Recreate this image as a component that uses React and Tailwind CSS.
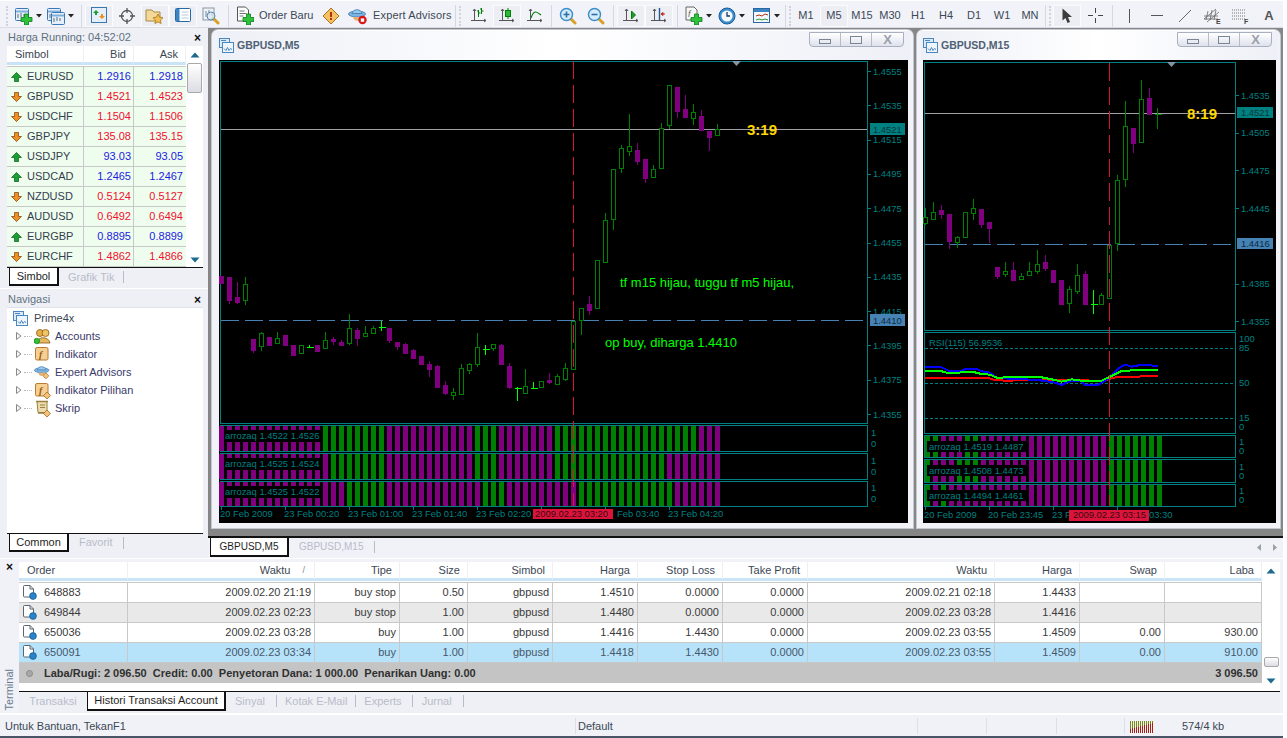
import React from 'react';

const PURPLE = '#800080';
const GREEN = '#008000';
const TEAL = '#008080';
const CRIMSON = '#dc143c';

// [kind, bodyTop, bodyBottom, wickTop, wickBottom]; p = bearish, g = bullish, d = doji
const candlesM5 = [
  ['p', 276, 283, 276, 283], ['p', 277, 300, 277, 304], ['p', 297, 302, 282, 304], ['g', 284, 300, 277, 305],
  ['p', 339, 350, 339, 353], ['g', 333, 346, 332, 351], ['p', 337, 345, 337, 346], ['g', 338, 343, 332, 343],
  ['p', 335, 345, 335, 345], ['p', 345, 355, 345, 355], ['g', 345, 353, 345, 353], ['d', 347, 347, 345, 348],
  ['p', 345, 351, 345, 351], ['g', 340, 348, 332, 348], ['p', 339, 341, 337, 345], ['p', 342, 345, 340, 346],
  ['g', 328, 343, 314, 345], ['p', 330, 338, 328, 346], ['g', 333, 336, 326, 336], ['g', 328, 333, 326, 333],
  ['d', 327, 327, 321, 331], ['p', 328, 340, 328, 343], ['p', 342, 346, 342, 350], ['p', 344, 353, 343, 353],
  ['p', 350, 358, 349, 358], ['p', 356, 364, 356, 364], ['p', 364, 369, 361, 377], ['p', 366, 387, 365, 387],
  ['p', 385, 393, 381, 395], ['g', 392, 395, 388, 400], ['g', 368, 394, 364, 395], ['g', 364, 370, 363, 374],
  ['g', 347, 364, 333, 367], ['d', 349, 349, 345, 355], ['g', 344, 348, 344, 351], ['p', 345, 364, 344, 365],
  ['p', 366, 387, 363, 389], ['d', 388, 388, 387, 401], ['g', 386, 393, 369, 394], ['d', 388, 388, 382, 389],
  ['g', 381, 387, 381, 388], ['p', 380, 382, 373, 384], ['g', 376, 384, 374, 384], ['g', 368, 379, 363, 381],
  ['g', 321, 369, 321, 369], ['g', 308, 320, 308, 335], ['p', 304, 310, 296, 315], ['g', 260, 308, 260, 308],
  ['g', 220, 262, 213, 262], ['g', 169, 219, 169, 230], ['g', 148, 168, 145, 173], ['g', 146, 151, 114, 156],
  ['p', 150, 161, 143, 165], ['p', 159, 178, 159, 183], ['g', 169, 177, 165, 178], ['g', 128, 168, 123, 168],
  ['g', 85, 125, 85, 129], ['p', 87, 111, 87, 118], ['p', 109, 117, 95, 118], ['g', 112, 118, 104, 125],
  ['p', 116, 130, 110, 130], ['p', 131, 137, 131, 151], ['g', 129, 135, 124, 135],
];

const candlesM15 = [
  ['g', 217, 223, 208, 225], ['g', 212, 219, 202, 219], ['p', 210, 214, 205, 219], ['p', 214, 241, 214, 249],
  ['g', 237, 242, 236, 248], ['g', 212, 237, 212, 237], ['g', 208, 213, 199, 220], ['p', 209, 224, 209, 228],
  ['p', 222, 228, 222, 243], ['p', 267, 276, 267, 279], ['g', 271, 274, 262, 277], ['p', 270, 280, 262, 280],
  ['g', 276, 279, 273, 279], ['g', 271, 275, 262, 275], ['g', 264, 271, 250, 274], ['p', 262, 268, 255, 271],
  ['p', 270, 282, 270, 282], ['p', 280, 304, 280, 304], ['g', 289, 303, 286, 313], ['g', 275, 291, 264, 294],
  ['p', 274, 304, 271, 305], ['d', 304, 304, 290, 314], ['g', 295, 304, 293, 305], ['g', 245, 298, 245, 299],
  ['g', 180, 243, 175, 251], ['g', 126, 179, 101, 187], ['p', 128, 143, 128, 153], ['g', 99, 142, 80, 142],
  ['p', 98, 114, 88, 114], ['c', 114, 114, 108, 129],
];

const Candles = ({ data, startX }) => (
  <g shapeRendering="crispEdges">
    {data.map((c, i) => {
      const x = startX + 8 * i + 0.5;
      const [kind, top, bottom, wickTop, wickBottom] = c;
      if (kind === 'd' || kind === 'c') {
        const col = kind === 'd' ? '#00ff00' : GREEN;
        return (
          <g key={i} stroke={col}>
            <line x1={x} x2={x} y1={wickTop} y2={wickBottom} />
            <line x1={x - 3} x2={x + 4} y1={top + 0.5} y2={top + 0.5} />
          </g>
        );
      }
      const col = kind === 'p' ? PURPLE : GREEN;
      return (
        <g key={i} stroke={col}>
          <line x1={x} x2={x} y1={wickTop} y2={wickBottom} />
          <rect x={x - 2} y={top + 0.5} width={4} height={bottom - top} fill={kind === 'p' ? PURPLE : '#000'} />
        </g>
      );
    })}
  </g>
);

// runs of the coloured bars: [last index, colour]
const barColor = (runs, i) => {
  for (const [end, col] of runs) if (i <= end) return col;
  return PURPLE;
};

const Strip = ({ x, y, h, count, runs }) => (
  <g shapeRendering="crispEdges">
    {Array.from({ length: count }).map((_, i) => (
      <rect key={i} x={x + 8 * i} y={y} width={5} height={h} fill={barColor(runs, i)} />
    ))}
  </g>
);

const AxisLabel = ({ x, y, children, fill = TEAL }) => (
  <text x={x} y={y} fill={fill}>{children}</text>
);

const ChartM5 = () => {
  const prices = ['1.4555', '1.4535', '1.4515', '1.4495', '1.4475', '1.4455', '1.4435', '1.4415', '1.4395', '1.4375', '1.4355'];
  const strips = [
    { y: 426, runs: [[12, PURPLE], [20, GREEN], [31, PURPLE], [34, GREEN], [41, PURPLE], [59, GREEN]], label: 'arrozaq 1.4522 1.4526' },
    { y: 454, runs: [[13, PURPLE], [20, GREEN], [31, PURPLE], [34, GREEN], [41, PURPLE], [55, GREEN]], label: 'arrozaq 1.4525 1.4524' },
    { y: 482, runs: [[15, PURPLE], [20, GREEN], [32, PURPLE], [35, GREEN], [44, PURPLE], [56, GREEN]], label: 'arrozaq 1.4525 1.4522' },
  ];
  const times = [[220, '20 Feb 2009'], [284, '23 Feb 00:20'], [348, '23 Feb 01:00'], [412, '23 Feb 01:40'], [476, '23 Feb 02:20'], [617, 'Feb 03:40'], [668, '23 Feb 04:20']];
  return (
    <svg width="689" height="463" viewBox="219 60 689 463" className="block bg-black font-['Liberation_Sans',sans-serif] text-[9.4px]">
      <g fill="none" stroke={TEAL} shapeRendering="crispEdges">
        <rect x="220.5" y="61.5" width="647" height="362" />
        <rect x="220.5" y="425.5" width="647" height="26" />
        <rect x="220.5" y="453.5" width="647" height="26" />
        <rect x="220.5" y="481.5" width="647" height="25" />
        {prices.map((p, i) => <line key={p} x1="867" x2="871" y1={71.5 + i * 34.3} y2={71.5 + i * 34.3} />)}
        {[221, 285, 349, 413, 477, 541, 605, 669].map((x) => <line key={x} x1={x + 0.5} x2={x + 0.5} y1="507" y2="510" />)}
      </g>
      <polygon points="732,61 741,61 736.5,66" fill="#7f97a6" />
      <line x1="221" x2="867" y1="129.5" y2="129.5" stroke="#a0a0a4" shapeRendering="crispEdges" />
      <line x1="221" x2="867" y1="320.5" y2="320.5" stroke="#4682b4" strokeDasharray="18 6" shapeRendering="crispEdges" />
      <Candles data={candlesM5} startX={221} />
      {strips.map((s) => (
        <g key={s.y}>
          <Strip x={219} y={s.y} h={s.y === 482 ? 24 : 25} count={63} runs={s.runs} />
          <rect x="225" y={s.y + 4} width="98" height="12" fill="#000" />
          <AxisLabel x={225} y={s.y + 13}>{s.label}</AxisLabel>
        </g>
      ))}
      <line x1="573.5" x2="573.5" y1="61" y2="506" stroke={CRIMSON} strokeDasharray="18 6" shapeRendering="crispEdges" />
      {prices.map((p, i) => <AxisLabel key={p} x={873} y={74.5 + i * 34.3}>{p}</AxisLabel>)}
      <rect x="870" y="123" width="35" height="12" fill={TEAL} />
      <AxisLabel x={873} y={132.5} fill="#06383a">1.4521</AxisLabel>
      <rect x="870" y="314" width="35" height="12" fill="#4682b4" />
      <AxisLabel x={873} y={323.5} fill="#0b2a44">1.4410</AxisLabel>
      {[['1', 436], ['0', 447], ['1', 464], ['0', 475], ['1', 491], ['0', 502]].map(([v, y]) => <AxisLabel key={y} x={871} y={y}>{v}</AxisLabel>)}
      {times.map(([x, t]) => <AxisLabel key={x} x={x} y={517}>{t}</AxisLabel>)}
      <rect x="533" y="509" width="80" height="10" fill={CRIMSON} />
      <AxisLabel x={535} y={517} fill="#3a0a10">2009.02.23 03:20</AxisLabel>
      <text x="747" y="135" fill="#ffd700" className="text-[15px] font-bold">3:19</text>
      <text x="620" y="287" fill="#00ff00" className="text-[13px]">tf m15 hijau, tuggu tf m5 hijau,</text>
      <text x="605" y="347" fill="#00ff00" className="text-[13px]">op buy, diharga 1.4410</text>
    </svg>
  );
};

const rsiLine = (pts) => pts.map(([x, y]) => `${915 + x / 3},${190 + y / 3}`).join(' ');
const rsiBlue = [[30, 530], [75, 530], [100, 542], [140, 542], [155, 536], [185, 536], [200, 544], [225, 548], [245, 564], [370, 570], [420, 578], [440, 585], [460, 575], [495, 572], [510, 584], [550, 584], [580, 566], [610, 535], [630, 524], [650, 530], [680, 524], [728, 528]];
const rsiGreen = [[30, 542], [75, 542], [100, 550], [125, 550], [140, 546], [175, 546], [200, 552], [225, 554], [245, 563], [370, 560], [420, 570], [440, 575], [470, 568], [500, 572], [560, 572], [590, 558], [620, 543], [670, 540], [728, 540]];
const rsiRed = [[30, 564], [220, 564], [240, 570], [270, 572], [370, 570], [570, 572], [590, 565], [610, 560], [660, 561], [690, 558], [728, 558]];

const ChartM15 = () => {
  const prices = [['1.4535', 0], ['1.4505', 1], ['1.4475', 2], ['1.4445', 3], ['1.4385', 5], ['1.4355', 6]];
  const strips = [
    { y: 436, h: 21, runs: [[1, GREEN], [4, PURPLE], [6, GREEN], [22, PURPLE], [29, GREEN]], label: 'arrozaq 1.4519 1.4487' },
    { y: 460, h: 22, runs: [[0, GREEN], [3, PURPLE], [6, GREEN], [22, PURPLE], [29, GREEN]], label: 'arrozaq 1.4508 1.4473' },
    { y: 485, h: 21, runs: [[0, GREEN], [1, PURPLE], [2, GREEN], [22, PURPLE], [29, GREEN]], label: 'arrozaq 1.4494 1.4461' },
  ];
  return (
    <svg width="353" height="463" viewBox="923 60 353 463" className="block bg-black font-['Liberation_Sans',sans-serif] text-[9.4px]">
      <g fill="none" stroke={TEAL} shapeRendering="crispEdges">
        <rect x="924.5" y="62.5" width="311" height="268" />
        <rect x="924.5" y="332.5" width="311" height="101" />
        <rect x="924.5" y="435.5" width="311" height="22" />
        <rect x="924.5" y="459.5" width="311" height="23" />
        <rect x="924.5" y="484.5" width="311" height="22" />
        {prices.map(([p, i]) => <line key={p} x1="1235" x2="1239" y1={95.5 + i * 37.7} y2={95.5 + i * 37.7} />)}
        {[925, 989, 1053, 1117].map((x) => <line key={x} x1={x + 0.5} x2={x + 0.5} y1="507" y2="510" />)}
      </g>
      <g stroke={TEAL} strokeDasharray="3 2" shapeRendering="crispEdges">
        <line x1="925" x2="1235" y1="348.5" y2="348.5" />
        <line x1="925" x2="1235" y1="383.5" y2="383.5" />
        <line x1="925" x2="1235" y1="418.5" y2="418.5" />
      </g>
      <polygon points="1167,62 1176,62 1171.5,67" fill="#7f97a6" />
      <line x1="925" x2="1235" y1="113.5" y2="113.5" stroke="#a0a0a4" shapeRendering="crispEdges" />
      <line x1="925" x2="1235" y1="244.5" y2="244.5" stroke="#4682b4" strokeDasharray="18 6" shapeRendering="crispEdges" />
      <Candles data={candlesM15} startX={925} />
      <g fill="none" strokeWidth="2" shapeRendering="crispEdges">
        <polyline points={rsiLine(rsiRed)} stroke="#ff0000" />
        <polyline points={rsiLine(rsiBlue)} stroke="#0000ff" />
        <polyline points={rsiLine(rsiGreen)} stroke="#00ff00" />
      </g>
      {strips.map((s) => (
        <g key={s.y}>
          <Strip x={925} y={s.y} h={s.h} count={30} runs={s.runs} />
          <rect x="927" y={s.y + 5} width="101" height="11" fill="#000" />
          <AxisLabel x={929} y={s.y + 14}>{s.label}</AxisLabel>
        </g>
      ))}
      <line x1="1109.5" x2="1109.5" y1="63" y2="506" stroke={CRIMSON} strokeDasharray="18 6" shapeRendering="crispEdges" />
      <AxisLabel x={929} y={346}>RSI(115) 56.9536</AxisLabel>
      {prices.map(([p, i]) => <AxisLabel key={p} x={1241} y={98.5 + i * 37.7}>{p}</AxisLabel>)}
      <rect x="1237" y="107" width="36" height="11" fill={TEAL} />
      <AxisLabel x={1241} y={116} fill="#06383a">1.4521</AxisLabel>
      <rect x="1237" y="238" width="36" height="11" fill="#4682b4" />
      <AxisLabel x={1241} y={247} fill="#0b2a44">1.4416</AxisLabel>
      {[['100', 342], ['85', 351], ['50', 386], ['15', 421], ['0', 430], ['1', 445], ['0', 454], ['1', 470], ['0', 479], ['1', 494], ['0', 503]].map(([v, y]) => (
        <AxisLabel key={y} x={1239} y={y}>{v}</AxisLabel>
      ))}
      <AxisLabel x={924} y={518}>20 Feb 2009</AxisLabel>
      <AxisLabel x={988} y={518}>20 Feb 23:45</AxisLabel>
      <AxisLabel x={1052} y={518}>23 F</AxisLabel>
      <AxisLabel x={1149} y={518}>03:30</AxisLabel>
      <rect x="1069" y="510" width="80" height="11" fill={CRIMSON} />
      <AxisLabel x={1073} y={518} fill="#3a0a10">2009.02.23 03:15</AxisLabel>
      <text x="1187" y="119" fill="#ffd700" className="text-[15px] font-bold">8:19</text>
    </svg>
  );
};

/* ---------- icons ---------- */
const Plus = ({ x = 0, y = 0 }) => (
  <path transform={`translate(${x} ${y})`} d="M3.5 0h4v3.5H11v4H7.5V11h-4V7.5H0v-4h3.5z" fill="#2cc23a" stroke="#0c7a1c" strokeWidth="0.8" />
);
const Arrow = () => (
  <svg width="6" height="4" className="ml-[3px] mt-[1px]"><path d="M0 0h6L3 3.5z" fill="#222" /></svg>
);
const Win = ({ x = 1, y = 1, w = 13, h = 12 }) => (
  <g>
    <rect x={x + 0.5} y={y + 0.5} width={w} height={h} rx="1" fill="#e6f0fa" stroke="#3a78b4" />
    <path d={`M${x + 1} ${y + 3.5}h${w - 1}`} stroke="#7fb0dc" strokeWidth="2" />
    <path d={`M${x + 3} ${y + 6}v4M${x + 6} ${y + 5}v4M${x + 9} ${y + 6}v3`} stroke="#5a6a7a" />
  </g>
);
const ChartFrame = ({ children }) => (
  <svg width="18" height="18" viewBox="0 0 18 18">
    <path d="M4.5 2v12M1 13.5h15M4.5 2l-1.5 2M4.5 2l1.5 2M16 13.5l-2-1.5M16 13.5l-2 1.5" stroke="#565656" fill="none" />
    {children}
  </svg>
);
const Mag = ({ sign }) => (
  <svg width="18" height="18" viewBox="0 0 18 18">
    <path d="M11 11l5 5" stroke="#d9a024" strokeWidth="3" strokeLinecap="round" />
    <circle cx="7.5" cy="7.5" r="6" fill="#d6ecfb" stroke="#3c8fca" strokeWidth="1.5" />
    <path d={sign === '+' ? 'M4.5 7.5h6M7.5 4.5v6' : 'M4.5 7.5h6'} stroke="#2a6fa8" strokeWidth="1.6" />
  </svg>
);
const UpArrow = () => (
  <svg width="11" height="10" viewBox="0 0 11 10"><path d="M5.5 0.5L10.5 5.5H7.5V9.5H3.5V5.5H0.5z" fill="#18a030" stroke="#0a5a18" strokeWidth="0.7" /></svg>
);
const DownArrow = () => (
  <svg width="11" height="10" viewBox="0 0 11 10"><path d="M5.5 9.5L10.5 4.5H7.5V0.5H3.5V4.5H0.5z" fill="#f09020" stroke="#7a3a08" strokeWidth="0.7" /></svg>
);
const Hat = ({ badge }) => (
  <svg width="20" height="18" viewBox="0 0 20 18">
    <ellipse cx="9" cy="7" rx="8.5" ry="3" fill="#7fb4de" stroke="#3a78b4" strokeWidth="0.8" />
    <path d="M4 6.5C4.5 1.5 13.5 1.5 14 6.5z" fill="#9ac8ea" stroke="#3a78b4" strokeWidth="0.8" />
    <path d="M5 10c1 5 7 5 8 0z" fill="#e8b070" />
    {badge === 'stop' && <g><circle cx="14.5" cy="13" r="4.2" fill="#d81818" /><rect x="12.8" y="11.4" width="3.4" height="3.4" fill="#fff" /></g>}
    {badge === 'gem' && <path d="M14 10l3.5 3.5L14 17l-3.5-3.5z" fill="#f2c27c" stroke="#a86a1c" strokeWidth="0.8" />}
  </svg>
);
const FBox = ({ gem }) => (
  <svg width="16" height="17" viewBox="0 0 16 17">
    <rect x="0.5" y="1.5" width="12.5" height="12.5" rx="1.5" fill="#f6cf92" stroke="#b87a30" />
    <text x="4" y="11.5" fill="#9a5a14" className="text-[10px] italic font-bold font-['Liberation_Serif',serif]">f</text>
    {gem && <path d="M12 10l3.5 3.5L12 17l-3.5-3.5z" fill="#f2c27c" stroke="#a86a1c" strokeWidth="0.8" />}
  </svg>
);
const Accounts = () => (
  <svg width="17" height="17" viewBox="0 0 17 17">
    <circle cx="6" cy="5" r="3.5" fill="#e8b048" stroke="#8a5a10" strokeWidth="0.8" />
    <circle cx="11.5" cy="5" r="3.5" fill="#f0c468" stroke="#8a5a10" strokeWidth="0.8" />
    <path d="M3 15c0-7 12-7 13 0z" fill="#e6b860" stroke="#8a5a10" strokeWidth="0.8" />
    <circle cx="2.8" cy="13" r="2.8" fill="#30c030" stroke="#0a7a14" strokeWidth="0.6" />
  </svg>
);
const Scroll = () => (
  <svg width="16" height="17" viewBox="0 0 16 17">
    <path d="M2 1.5h10v11H3z" fill="#ecdcae" stroke="#9a8040" />
    <path d="M1 1.5h12M3 13h10" stroke="#9a8040" strokeWidth="1.6" />
    <path d="M5 5h5M5 7.5h5" stroke="#9a8040" />
    <path d="M12 10l3.5 3.5L12 17l-3.5-3.5z" fill="#f2c27c" stroke="#a86a1c" strokeWidth="0.8" />
  </svg>
);
const DocIcon = () => (
  <svg width="15" height="15" viewBox="0 0 15 15">
    <path d="M1.5 1.5c0-.6.4-1 1-1h5.5l3.5 3.5v7c0 .6-.4 1-1 1h-8c-.6 0-1-.4-1-1z" fill="#fff" stroke="#5a6470" />
    <path d="M8 .5v3.5h3.5" fill="none" stroke="#5a6470" />
    <circle cx="11" cy="11" r="3.4" fill="#2a82c8" stroke="#155a90" strokeWidth="0.7" />
  </svg>
);
const ChartWinIcon = () => (
  <svg width="15" height="15" viewBox="0 0 15 15">
    <rect x="0.5" y="0.5" width="10" height="9" fill="#dbe9f7" stroke="#4a86c0" />
    <rect x="3.5" y="4.5" width="11" height="10" fill="#eef5fc" stroke="#4a86c0" />
    <path d="M5 10.5l2 2 1.5-3 1.5 3 1.5-2 1.5 1" fill="none" stroke="#4a86c0" />
    <path d="M2 2.5h5" stroke="#4a86c0" />
  </svg>
);
const SmallTri = ({ dir }) => (
  <svg width="10" height="6" viewBox="0 0 10 6">
    <path d={dir === 'up' ? 'M0.5 5.5L5 0.5l4.5 5z' : 'M0.5 0.5L5 5.5l4.5-5z'} fill="#1c6a8c" />
  </svg>
);
const TreeArrow = () => (
  <svg width="6" height="8" viewBox="0 0 6 8"><path d="M0.5 0.5L5 4 0.5 7.5z" fill="#f4f4f4" stroke="#8a8a8a" /></svg>
);

/* ---------- toolbar ---------- */
const Tool = ({ w = 'w-[28px]', active, children }) => (
  <div className={`${w} h-[22px] shrink-0 flex items-center justify-center ${active ? 'bg-[#eceef4] border border-[#fafbfd]' : ''}`}>
    {children}
  </div>
);
const Sep = ({ w = 'w-[6px]' }) => (
  <div className={`${w} h-[22px] shrink-0 flex justify-center`}><div className="w-px h-full bg-[#d4d8e2]" /></div>
);
const Grip = ({ w = 'w-[7px]' }) => (
  <div className={`${w} h-[20px] shrink-0 border-l-2 border-dotted border-[#cfd3dd] ml-[2px]`} />
);

const Toolbar = () => (
  <div className="h-[28px] shrink-0 flex items-center pt-[3px] border-t border-[#ffffff] border-b border-b-[#d8dce6] bg-[#f1f3f9] text-[#3c4854] text-[11px]">
    <div className="w-[4px] shrink-0" />
    <Grip />
    <Tool w="w-[29px]">
      <svg width="19" height="18" viewBox="0 0 19 18"><Win y={1} /><Plus x={7} y={7} /></svg><Arrow />
    </Tool>
    <Tool w="w-[35px]">
      <svg width="19" height="18" viewBox="0 0 19 18"><Win x={1} y={1} /><Win x={5} y={5} /></svg><Arrow />
    </Tool>
    <Sep w="w-[8px]" />
    <Tool active>
      <svg width="17" height="17" viewBox="0 0 17 17"><rect x="0.5" y="0.5" width="15" height="15" fill="#e4eff9" stroke="#3a78b4" /><path d="M5 3l3 3H6v2H4V6H2z" fill="#1aa030" /><path d="M11 12l3-3h-2V7h-2v2H8z" fill="#e89020" /></svg>
    </Tool>
    <Tool>
      <svg width="18" height="18" viewBox="0 0 18 18"><circle cx="9" cy="9" r="5.5" fill="none" stroke="#555" strokeWidth="1.3" /><path d="M9 1v5M9 12v5M1 9h5M12 9h5" stroke="#555" strokeWidth="1.3" /></svg>
    </Tool>
    <Tool active>
      <svg width="20" height="18" viewBox="0 0 20 18"><path d="M1 3h6l2 2h6v9H1z" fill="#f3d89a" stroke="#a88a44" /><path d="M13 7l1.6 3.2 3.4.5-2.5 2.4.6 3.4-3.1-1.6-3.1 1.6.6-3.4L8 10.7l3.4-.5z" fill="#f2bf52" stroke="#a8761c" strokeWidth="0.8" /></svg>
    </Tool>
    <Tool active>
      <svg width="17" height="15" viewBox="0 0 17 15"><rect x="0.5" y="0.5" width="15" height="13" rx="1" fill="#fff" stroke="#2a68a4" /><rect x="1" y="1" width="3.5" height="12" fill="#3a84c4" /><path d="M6.5 4h7M6.5 7h7M6.5 10h7" stroke="#b8c8d8" /></svg>
    </Tool>
    <Tool>
      <svg width="18" height="18" viewBox="0 0 18 18"><rect x="1" y="1" width="11" height="12" fill="#eef3f8" stroke="#8a96a4" /><path d="M4 4v6M7 3v5M10 5v4" stroke="#7a8a9a" /><path d="M11 11l5 5" stroke="#d9a024" strokeWidth="3" strokeLinecap="round" /><circle cx="9" cy="9" r="4" fill="#d8e8f4" fillOpacity="0.7" stroke="#5a8aaa" /></svg>
    </Tool>
    <Sep w="w-[6px]" />
    <Tool>
      <svg width="18" height="19" viewBox="0 0 18 19"><path d="M1.5 1h8l3 3v11h-11z" fill="#fff" stroke="#555" /><path d="M3.5 5h5M3.5 7.5h7M3.5 10h4" stroke="#777" /><Plus x={7} y={8} /></svg>
    </Tool>
    <div className="w-[58px] shrink-0 whitespace-nowrap">Order Baru</div>
    <Tool>
      <svg width="18" height="18" viewBox="0 0 18 18"><path d="M9 1l8 8-8 8-8-8z" fill="#f4c060" stroke="#a87420" /><rect x="8" y="5" width="2" height="5" fill="#b03010" /><rect x="8" y="11" width="2" height="2" fill="#b03010" /></svg>
    </Tool>
    <Tool w="w-[26px]"><Hat badge="stop" /></Tool>
    <div className="w-[83px] shrink-0 pl-[2px] whitespace-nowrap tracking-[0.15px]">Expert Advisors</div>
    <Sep w="w-[3px]" />
    <Grip w="w-[6px]" />
    <Tool>
      <ChartFrame><path d="M8.5 3v7M7 4h1.5M8.5 6h2M11.5 1v6M10 2h1.5M11.5 4h2" stroke={GREEN} fill="none" /></ChartFrame>
    </Tool>
    <Tool active>
      <ChartFrame><path d="M10 1v11" stroke={GREEN} /><rect x="7.5" y="3.5" width="5" height="6" fill="#2cb83a" stroke={GREEN} /></ChartFrame>
    </Tool>
    <Tool>
      <ChartFrame><path d="M5 11c3-9 6-6 10-3" stroke={GREEN} fill="none" strokeWidth="1.2" /></ChartFrame>
    </Tool>
    <Sep w="w-[5px]" />
    <Tool><Mag sign="+" /></Tool>
    <Tool><Mag sign="-" /></Tool>
    <Sep w="w-[7px]" />
    <Tool active>
      <ChartFrame><path d="M9.5 4l4 4-4 4z" fill="#1e9a2c" stroke={GREEN} /></ChartFrame>
    </Tool>
    <Tool active>
      <ChartFrame><path d="M9.5 1v12" stroke="#1c5a90" strokeWidth="1.4" /><path d="M15 7H11M11 7l2-1.5v3z" stroke="#c03020" fill="#c03020" /></ChartFrame>
    </Tool>
    <Sep w="w-[8px]" />
    <Tool w="w-[33px]">
      <svg width="19" height="19" viewBox="0 0 19 19"><path d="M2 1h8l3 3v10H2z" fill="#f7f7f7" stroke="#666" /><text x="4" y="11" fill="#666" className="text-[9px] italic">f</text><Plus x={7} y={8} /></svg><Arrow />
    </Tool>
    <Tool w="w-[35px]">
      <svg width="18" height="18" viewBox="0 0 18 18"><circle cx="9" cy="9" r="8" fill="#3a8ed2" stroke="#1c5a94" /><circle cx="9" cy="9" r="5.6" fill="#f4fafe" /><path d="M9 5v4h3" stroke="#1c3a64" strokeWidth="1.3" fill="none" /></svg><Arrow />
    </Tool>
    <Tool w="w-[35px]">
      <svg width="18" height="16" viewBox="0 0 18 16"><rect x="0.5" y="0.5" width="16" height="14" fill="#f4f8fc" stroke="#2a68a4" /><rect x="1" y="1" width="15" height="3" fill="#3a84c4" /><path d="M3 8l3-1 3 1 3-2 3 1" stroke="#a83010" fill="none" /><path d="M3 12l3-1 3 1 3-1 3 1" stroke="#2a9a3a" fill="none" /></svg><Arrow />
    </Tool>
    <Sep w="w-[3px]" />
    <Grip w="w-[3px]" />
    {['M1', 'M5', 'M15', 'M30', 'H1', 'H4', 'D1', 'W1', 'MN'].map((p) => (
      <Tool key={p} active={p === 'M5'}>{p}</Tool>
    ))}
    <Sep w="w-[3px]" />
    <Grip w="w-[4px]" />
    <Tool active>
      <svg width="12" height="16" viewBox="0 0 12 16"><path d="M1.5 0.5v12l3-2.5 2 5 2.5-1-2-5h4z" fill="#3c3c3c" /></svg>
    </Tool>
    <Tool>
      <svg width="15" height="15" viewBox="0 0 15 15"><path d="M7.5 0v5M7.5 10v5M0 7.5h5M10 7.5h5" stroke="#444" /></svg>
    </Tool>
    <Sep w="w-[6px]" />
    <Tool><div className="w-px h-[14px] bg-[#555]" /></Tool>
    <Tool><div className="w-[12px] h-px bg-[#555]" /></Tool>
    <Tool>
      <svg width="14" height="14" viewBox="0 0 14 14"><path d="M1 13L13 1" stroke="#666" /></svg>
    </Tool>
    <Tool>
      <svg width="20" height="18" viewBox="0 0 20 18"><path d="M1 12L13 2M4 15L16 5M1 9h14M1 12h14M5 4l-2 9M9 3L7 13M13 3l-2 10" stroke="#666" fill="none" strokeWidth="0.8" /><text x="13" y="17" fill="#444" className="text-[7px] font-bold">E</text></svg>
    </Tool>
    <Tool>
      <svg width="20" height="18" viewBox="0 0 20 18"><path d="M1 3h13M1 6h13M1 9h13M1 12h13" stroke="#777" strokeDasharray="1 1" /><text x="13" y="17" fill="#444" className="text-[7px] font-bold">F</text></svg>
    </Tool>
    <Tool><span className="text-[13px] font-bold text-[#555]">A</span></Tool>
  </div>
);

/* ---------- side panels ---------- */
const BottomTab = ({ children, cls = '' }) => (
  <div className={`bg-white border-l border-r-2 border-b-2 border-[#111] flex items-center justify-center text-[#1e1e1e] ${cls}`}>{children}</div>
);
const TabSep = () => <div className="w-px h-[12px] bg-[#b8bcc8]" />;

const markets = [
  ['EURUSD', '1.2916', '1.2918', true], ['GBPUSD', '1.4521', '1.4523', false], ['USDCHF', '1.1504', '1.1506', false],
  ['GBPJPY', '135.08', '135.15', false], ['USDJPY', '93.03', '93.05', true], ['USDCAD', '1.2465', '1.2467', true],
  ['NZDUSD', '0.5124', '0.5127', false], ['AUDUSD', '0.6492', '0.6494', false], ['EURGBP', '0.8895', '0.8899', true],
  ['EURCHF', '1.4862', '1.4866', false],
];

const HeaderCell = ({ children, cls = '' }) => (
  <div className={`h-[19px] border-r border-[#eef0f4] border-b-[3px] border-b-[#c8e4f6] flex items-center ${cls}`}>{children}</div>
);

const MarketWatch = () => (
  <div className="h-[260px] shrink-0 flex flex-col pl-[7px] pr-[5px] border-b border-[#ffffff]">
    <div className="h-[17px] shrink-0 flex items-center justify-between text-[#5f7080]">
      <span className="pl-px">Harga Running: 04:52:02</span>
      <span className="pr-[2px] text-[#111] font-bold text-[12px] leading-none">×</span>
    </div>
    <div className="flex-1 flex bg-white">
      <div className="w-[179px] flex flex-col">
        <div className="grid grid-cols-[77px_50px_52px] shrink-0 text-[#3a4652]">
          <HeaderCell cls="pl-[8px]">Simbol</HeaderCell>
          <HeaderCell cls="justify-end pr-[7px]">Bid</HeaderCell>
          <HeaderCell cls="justify-end pr-[7px]">Ask</HeaderCell>
        </div>
        <div className="h-[2px] shrink-0 border-b border-[#c8c8c8]" />
        {markets.map(([sym, bid, ask, up]) => (
          <div key={sym} className="grid grid-cols-[77px_50px_52px] h-[20px] shrink-0 bg-[#effdef] border-b border-[#c8c8c8]">
            <div className="flex items-center gap-[5px] pl-[4px] border-r border-[#c8c8c8] text-[#34404c]">
              {up ? <UpArrow /> : <DownArrow />}{sym}
            </div>
            <div className={`flex items-center justify-end pr-[2px] border-r border-[#c8c8c8] ${up ? 'text-[#1c1ce0]' : 'text-[#f01030]'}`}>{bid}</div>
            <div className={`flex items-center justify-end pr-[3px] ${up ? 'text-[#1c1ce0]' : 'text-[#f01030]'}`}>{ask}</div>
          </div>
        ))}
      </div>
      <div className="w-[17px] flex flex-col items-center">
        <div className="h-[17px] flex items-center"><SmallTri dir="up" /></div>
        <div className="w-[15px] h-[30px] rounded-[2px] border border-[#a8a8a8] bg-gradient-to-b from-white to-[#dcdce4]" />
        <div className="flex-1 flex items-end pb-[4px]"><SmallTri dir="down" /></div>
      </div>
    </div>
    <div className="h-[21px] shrink-0 flex border-t border-[#111] bg-[#eef0f6] text-[#b8bcc8]">
      <BottomTab cls="ml-[2px] w-[50px] h-[18px]">Simbol</BottomTab>
      <div className="pl-[9px] pr-[9px] h-[18px] flex items-center">Grafik Tik</div>
      <div className="h-[18px] flex items-center"><TabSep /></div>
    </div>
  </div>
);

const tree = [
  ['Accounts', <Accounts key="a" />], ['Indikator', <FBox key="i" />], ['Expert Advisors', <Hat key="h" badge="gem" />],
  ['Indikator Pilihan', <FBox key="p" gem />], ['Skrip', <Scroll key="s" />],
];

const Navigator = () => (
  <div className="flex-1 flex flex-col pl-[7px] pr-[5px] pt-[3px]">
    <div className="h-[15px] shrink-0 flex items-center justify-between text-[#5f7080]">
      <span className="pl-px">Navigasi</span>
      <span className="pr-[2px] text-[#111] font-bold text-[12px] leading-none">×</span>
    </div>
    <div className="h-[226px] shrink-0 bg-white border-t border-[#dfe2ea] pt-[1px] pl-[6px] text-[#3a3a6a]">
      <div className="h-[18px] flex items-center gap-[6px] text-[#3a4652]"><ChartWinIcon />Prime4x</div>
      {tree.map(([label, icon]) => (
        <div key={label} className="h-[18px] flex items-center">
          <div className="w-[3px] shrink-0" /><TreeArrow />
          <div className="w-[8px] shrink-0 ml-[2px] border-t border-dotted border-[#b8b8b8]" />
          <div className="w-[19px] shrink-0 ml-[1px] flex justify-center"><div className="w-[17px] flex justify-center">{icon}</div></div>
          <span className="pl-[3px]">{label}</span>
        </div>
      ))}
    </div>
    <div className="h-[20px] shrink-0 flex border-t border-[#111] bg-[#eef0f6] text-[#b8bcc8]">
      <BottomTab cls="ml-[2px] w-[60px] h-[18px]">Common</BottomTab>
      <div className="pl-[10px] pr-[10px] h-[17px] flex items-center">Favorit</div>
      <div className="h-[17px] flex items-center"><TabSep /></div>
    </div>
  </div>
);

/* ---------- chart windows ---------- */
const WinButtons = () => (
  <div className="flex h-[15px] mt-[1px] mr-[4px] rounded-b-[4px] border border-[#a8b0c0] bg-gradient-to-b from-white to-[#dfe2ec]">
    <div className="w-[31px] flex items-center justify-center border-r border-[#b8bcc8]"><div className="w-[12px] h-[5px] mt-[3px] border border-[#7c8594]" /></div>
    <div className="w-[31px] flex items-center justify-center border-r border-[#b8bcc8]"><div className="w-[12px] h-[8px] border border-[#7c8594]" /></div>
    <div className="w-[31px] flex items-center justify-center text-[#9aa0aa] font-bold text-[13px] leading-none">X</div>
  </div>
);

const ChartWindow = ({ title, pad, children }) => (
  <div className={`${pad} flex flex-col rounded-t-[6px] bg-[#f1f3f9] border-t border-white shadow-[0_0_0_1px_#c4c8d0]`}>
    <div className="h-[29px] shrink-0 flex justify-between bg-gradient-to-r from-[#eef0f7] via-white to-[#eef0f7] -mx-[2px] px-[2px]">
      <div className="flex items-center gap-[3px] font-bold text-[10.5px] text-[#4f6074]"><ChartWinIcon />{title}</div>
      <WinButtons />
    </div>
    {children}
  </div>
);

const MdiArea = () => (
  <div className="h-[508px] shrink-0 bg-[#868686] pl-[4px] pt-[2px] flex gap-[4px]">
    <div className="h-[497px]">
      <ChartWindow title="GBPUSD,M5" pad="pl-[7px] pr-[5px] pb-[5px]"><ChartM5 /></ChartWindow>
    </div>
    <div className="h-[497px]">
      <ChartWindow title="GBPUSD,M15" pad="pl-[6px] pr-[4px] pb-[5px]"><ChartM15 /></ChartWindow>
    </div>
  </div>
);

const ChartTabs = () => (
  <div className="h-[22px] shrink-0 flex border-t-2 border-[#111] bg-[#f0f2f8] text-[#b8bcc8] text-[10px] pl-[2px]">
    <BottomTab cls="w-[79px] h-[19px]">GBPUSD,M5</BottomTab>
    <div className="pl-[10px] pr-[11px] h-[18px] flex items-center">GBPUSD,M15</div>
    <div className="h-[18px] flex items-center"><TabSep /></div>
    <div className="flex-1 h-[18px] flex items-center justify-end gap-[12px] pr-[6px]">
      <svg width="4" height="7"><path d="M4 0v7L0 3.5z" fill="#9aa0aa" /></svg>
      <svg width="4" height="7"><path d="M0 0v7l4-3.5z" fill="#9aa0aa" /></svg>
    </div>
  </div>
);

/* ---------- terminal ---------- */
const COLS = 'grid grid-cols-[109px_187px_85px_68px_85px_85px_85px_85px_187px_85px_85px_97px]';
const heads = ['Tipe', 'Size', 'Simbol', 'Harga', 'Stop Loss', 'Take Profit', 'Waktu', 'Harga', 'Swap', 'Laba'];
const orders = [
  ['648883', '2009.02.20 21:19', 'buy stop', '0.50', 'gbpusd', '1.4510', '0.0000', '0.0000', '2009.02.21 02:18', '1.4433', '', ''],
  ['649844', '2009.02.23 02:23', 'buy stop', '1.00', 'gbpusd', '1.4480', '0.0000', '0.0000', '2009.02.23 03:28', '1.4416', '', ''],
  ['650036', '2009.02.23 03:28', 'buy', '1.00', 'gbpusd', '1.4416', '1.4430', '0.0000', '2009.02.23 03:55', '1.4509', '0.00', '930.00'],
  ['650091', '2009.02.23 03:34', 'buy', '1.00', 'gbpusd', '1.4418', '1.4430', '0.0000', '2009.02.23 03:55', '1.4509', '0.00', '910.00'],
];
const rowBg = ['bg-white text-[#3a3a3a]', 'bg-[#e9e9e9] text-[#3a3a3a]', 'bg-white text-[#3a3a3a]', 'bg-[#b6e2fa] text-[#46586a]'];

const TerminalTabs = () => (
  <div className="h-[22px] shrink-0 flex items-start border-t border-[#111] bg-[#eef0f6] text-[#b8bcc8] w-[1261px]">
    <div className="w-[68px] h-[18px] flex items-center justify-center">Transaksi</div>
    <BottomTab cls="w-[139px] h-[19px]">Histori Transaksi Account</BottomTab>
    <div className="h-[18px] pl-[9px] pr-[11px] flex items-center">Sinyal</div>
    <div className="h-[18px] flex items-center"><TabSep /></div>
    <div className="h-[18px] pl-[8px] pr-[8px] flex items-center">Kotak E-Mail</div>
    <div className="h-[18px] flex items-center"><TabSep /></div>
    <div className="h-[18px] pl-[8px] pr-[10px] flex items-center">Experts</div>
    <div className="h-[18px] flex items-center"><TabSep /></div>
    <div className="h-[18px] pl-[9px] pr-[11px] flex items-center">Jurnal</div>
    <div className="h-[18px] flex items-center"><TabSep /></div>
  </div>
);

const Terminal = () => (
  <div className="h-[155px] shrink-0 flex border-t border-white bg-[#f0f2f8]">
    <div className="w-[19px] shrink-0 flex flex-col items-center">
      <span className="text-[#111] font-bold text-[12px] leading-none mt-[2px]">×</span>
      <div className="flex-1 flex items-end pb-[2px]">
        <span className="[writing-mode:vertical-rl] rotate-180 text-[#6b7a8a]">Terminal</span>
      </div>
    </div>
    <div className="flex-1 flex flex-col pt-[3px]">
      <div className="flex">
        <div className="w-[1243px]">
          <div className={`${COLS} bg-white text-[#3c4854]`}>
            <HeaderCell cls="pl-[8px]">Order</HeaderCell>
            <HeaderCell cls="justify-end pr-[9px]">
              Waktu<span className="ml-[12px] text-[#888] text-[9px]">/</span>
            </HeaderCell>
            {heads.map((h, i) => (
              <HeaderCell key={i} cls="justify-end pr-[7px]">{h}</HeaderCell>
            ))}
          </div>
          <div className="h-[2px] bg-white border-b border-[#c8c8c8]" />
          {orders.map((row, r) => (
            <div key={row[0]} className={`${COLS} h-[20px] border-b border-[#c8c8c8] ${rowBg[r]}`}>
              {row.map((cell, c) => (
                c === 0 ? (
                  <div key={c} className="flex items-center gap-[7px] pl-[3px] border-r border-[#c8c8c8]"><DocIcon />{cell}</div>
                ) : (
                  <div key={c} className="flex items-center justify-end pr-[3px] border-r border-[#c8c8c8]">{cell}</div>
                )
              ))}
            </div>
          ))}
          <div className="h-[20px] bg-[#c4c4c4] flex items-center justify-between font-bold text-[#303030] pr-[4px]">
            <div className="flex items-center">
              <div className="w-[7px] h-[7px] ml-[7px] mr-[11px] rounded-full bg-[#a8a8a8] border border-[#8a8a8a]" />
              <span className="whitespace-pre">Laba/Rugi: 2 096.50  Credit: 0.00  Penyetoran Dana: 1 000.00  Penarikan Uang: 0.00</span>
            </div>
            <span>3 096.50</span>
          </div>
          <div className="h-[8px] bg-white" />
        </div>
        <div className="w-[18px] bg-white flex flex-col items-center">
          <div className="h-[18px] flex items-center"><SmallTri dir="up" /></div>
          <div className="flex-1 flex flex-col justify-end">
            <div className="w-[15px] h-[10px] rounded-[2px] border border-[#a8a8a8] bg-gradient-to-b from-white to-[#dcdce4] mb-[10px]" />
          </div>
          <div className="h-[14px] flex items-start pt-[1px]"><SmallTri dir="down" /></div>
        </div>
      </div>
      <TerminalTabs />
    </div>
  </div>
);

/* ---------- status bar ---------- */
const connHeights = [4, 5, 5, 6, 6, 7, 7, 8, 8, 9, 9, 10];
const StatusBar = () => (
  <div className="h-[25px] shrink-0 flex items-center pt-[1px] bg-[#f0f2f8] border-t-2 border-white border-b-2 border-b-[#4a5568] text-[#3c4854]">
    <div className="w-[575px] pl-[5px]">Untuk Bantuan, TekanF1</div>
    <div className="w-px h-[16px] bg-[#dcdfe8]" />
    <div className="w-[341px] pl-[2px]">Default</div>
    {['w-[68px]', 'w-[69px]', 'w-[67px]'].map((w) => (
      <React.Fragment key={w}>
        <div className="w-px h-[16px] bg-[#dcdfe8]" />
        <div className={w} />
      </React.Fragment>
    ))}
    <div className="w-px h-[16px] bg-[#dcdfe8]" />
    <div className="w-[57px] pl-[5px]">
      <svg width="24" height="13" viewBox="0 0 24 13" className="block" shapeRendering="crispEdges">
        {connHeights.map((h, i) => (
          <g key={i}>
            <rect x={i * 2} y="1" width="1" height={12 - h} fill="#7a8a10" />
            <rect x={i * 2} y={13 - h} width="1" height={h} fill="#a82010" />
          </g>
        ))}
      </svg>
    </div>
    <div className="flex-1">574/4 kb</div>
  </div>
);

export default function App() {
  return (
    <div className="w-[1283px] h-[738px] flex flex-col overflow-hidden bg-[#f0f2f8] text-[11px] leading-none font-['Liberation_Sans',Arial,sans-serif]">
      <Toolbar />
      <div className="h-[530px] shrink-0 flex">
        <div className="w-[208px] shrink-0 flex flex-col pt-[1px] bg-[#eef0f6]">
          <MarketWatch />
          <Navigator />
        </div>
        <div className="flex-1 flex flex-col min-w-0">
          <MdiArea />
          <ChartTabs />
        </div>
      </div>
      <Terminal />
      <StatusBar />
    </div>
  );
}
